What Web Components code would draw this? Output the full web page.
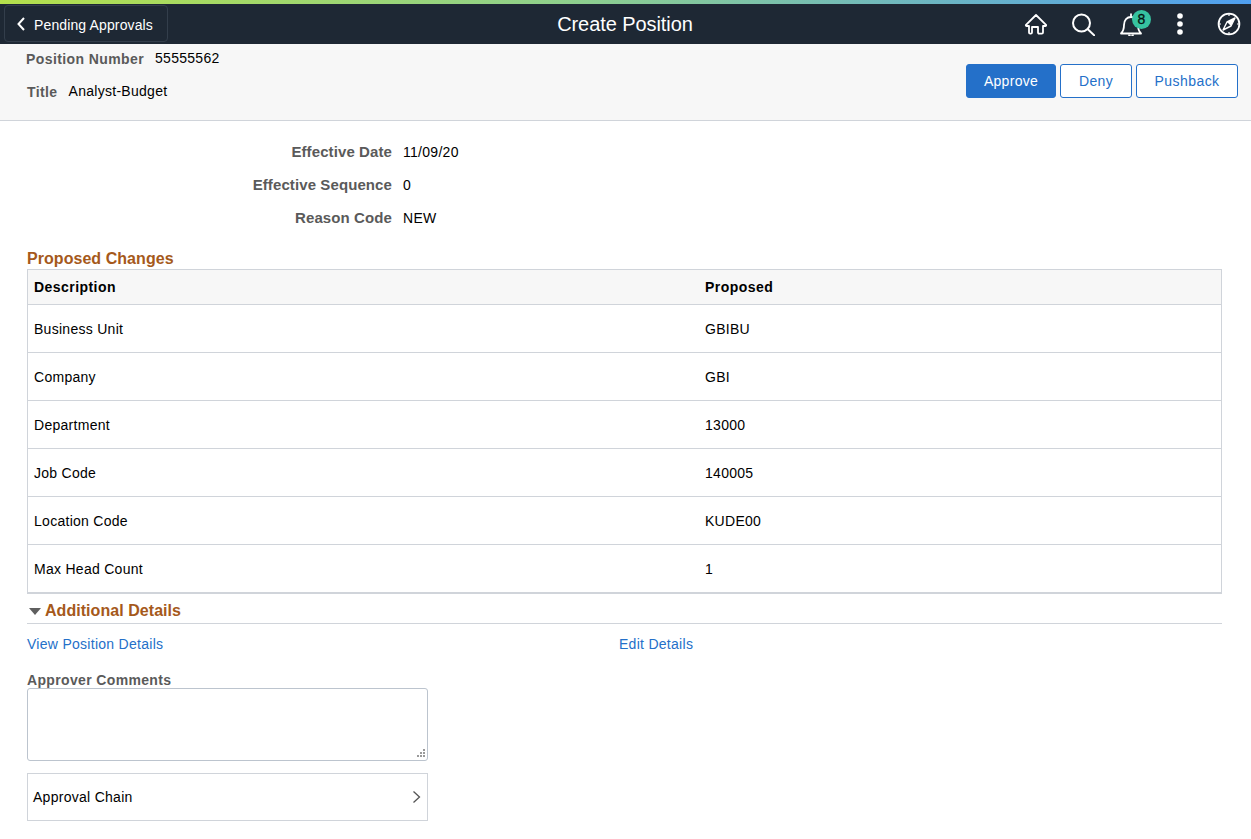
<!DOCTYPE html>
<html lang="en"><head><meta charset="utf-8"><title>Create Position</title>
<style>
html,body{margin:0;padding:0;background:#fff;font:14px "Liberation Sans",Arial,sans-serif;color:#000;letter-spacing:.28px}
body{height:839px;overflow:hidden}
</style></head><body>
<app-topbar heading="Create Position" back="Pending Approvals" count="8"></app-topbar>
<summary-bar number="55555562" title-text="Analyst-Budget"></summary-bar>
<main-content></main-content>
<script>
function shadow(el,html){el.attachShadow({mode:'open'}).innerHTML=html;return el.shadowRoot}
customElements.define('app-topbar',class extends HTMLElement{connectedCallback(){shadow(this,`<style>
:host{display:block;color:#fff}
.strip{height:4px;background:linear-gradient(90deg,#b4e04c 0%,#8fd08c 45%,#4f9ff0 100%)}
.bar{height:40px;background:#1e2834;display:grid;grid-template-columns:1fr auto 1fr;align-items:center}
.back{justify-self:start;display:flex;align-items:center;box-sizing:border-box;width:164px;height:37px;margin:-1px 0 0 4px;padding-left:11px;gap:8px;border:1px solid #333e4b;border-radius:4px;font-size:14px;letter-spacing:.13px}
.back span{padding-top:2px}
h1{margin:0;font-size:20px;font-weight:400;line-height:40px;letter-spacing:-.07px;margin-left:-1px}
.icons{justify-self:end;display:flex;align-items:center;position:relative}
.icons span{display:flex;width:48px;height:40px;align-items:center;justify-content:center;position:relative}
svg{display:block}
.badge{position:absolute;left:25px;top:6px;width:19px;height:19px;border-radius:50%;background:#36c2a0;color:#06120f;font-size:14px;line-height:19px;text-align:center;font-style:normal;letter-spacing:0;-webkit-text-stroke:.3px #06120f}
</style><div class="strip"></div><div class="bar">
<div class="back"><svg width="10" height="16" viewBox="0 0 10 16" fill="none" stroke="#fff" stroke-width="2"><path d="M8 2 2.500 8 8 14"/></svg><span>${this.getAttribute('back')}</span></div>
<h1>${this.getAttribute('heading')}</h1>
<div class="icons">
<span><svg width="24" height="24" viewBox="0 0 24 24" fill="none" stroke="#fff" stroke-width="1.800" stroke-linejoin="round" stroke-linecap="round"><path d="M3 12.800 13 3l10 9.800c.4.600 0 1.200-.6 1.200H20v6.500c0 .8-.5 1.200-1.200 1.200h-2.600c-.7 0-1.200-.4-1.200-1.200V15h-6v5.500c0 .8-.5 1.200-1.200 1.200H7.200c-.7 0-1.200-.4-1.200-1.200V14H3.600c-.6 0-1-.6-.6-1.200z"/></svg></span>
<span><svg width="24" height="24" viewBox="0 0 24 24" fill="none" stroke="#fff" stroke-width="2"><circle cx="10.500" cy="11" r="8.500"/><path d="M16.800 17.300 24 24"/></svg></span>
<span><svg width="24" height="24" viewBox="0 0 24 24" fill="none" stroke="#fff" stroke-width="1.800" stroke-linejoin="round"><path d="M2 21.500c2-2 3-4 3-8.500 0-5 3-8 7-8s7 3 7 8c0 4.500 1 6.500 3 8.500z"/><path d="M10 22.500a2 2 0 0 0 4 0M12 1.500v3"/></svg><i class="badge">${this.getAttribute('count')}</i></span>
<span><svg style="margin-left:2px" width="8" height="24" viewBox="0 0 8 24" fill="#fff"><circle cx="4" cy="4" r="2.800"/><circle cx="4" cy="12" r="2.800"/><circle cx="4" cy="20" r="2.800"/></svg></span>
<span><svg style="margin-left:3px" width="24" height="24" viewBox="0 0 24 24" fill="none" stroke="#fff" stroke-width="1.800"><circle cx="12" cy="12" r="10.400"/><path d="M18 6 14 14 6 18l4-8z" stroke-width="1.400" stroke-linejoin="round"/><path d="M18 6 10 10l4 4z" fill="#fff" stroke="none"/><path d="M12 1.500v2.500M12 20v2.500M1.500 12H4M20 12h2.500" stroke-width="1.200"/></svg></span>
</div></div>`)}});

customElements.define('action-button',class extends HTMLElement{connectedCallback(){shadow(this,`<style>
:host{display:block}
button{display:block;box-sizing:border-box;height:34px;width:var(--w);border:1px solid #2470c9;border-radius:3px;background:#fff;color:#2470c9;font:14px "Liberation Sans",Arial,sans-serif;letter-spacing:var(--ls,.3px);padding:0}
:host([primary]) button{background:#2470c9;color:#fff}
</style><button><slot></slot></button>`)}});

customElements.define('summary-bar',class extends HTMLElement{connectedCallback(){shadow(this,`<style>
:host{display:flex;box-sizing:border-box;height:77px;background:#f7f7f7;border-bottom:1px solid #d0d4da;padding:0 13px 0 26px;justify-content:space-between}
.info{display:flex;flex-direction:column}
.row{display:flex;height:29px;align-items:center}
.row+.row{height:37px}
b{color:#5a5a5a;margin-right:11px;letter-spacing:.4px}
.t{margin-left:1px}
.v{margin-top:-1px}
.acts{display:flex;gap:4px;margin-top:20px}
</style><div class="info">
<div class="row"><b>Position Number</b><span class="v">${this.getAttribute('number')}</span></div>
<div class="row"><b class="t">Title</b><span class="v">${this.getAttribute('title-text')}</span></div>
</div><div class="acts">
<action-button primary style="--w:90px">Approve</action-button>
<action-button style="--w:72px">Deny</action-button>
<action-button style="--w:102px;--ls:.45px">Pushback</action-button>
</div>`)}});

customElements.define('field-row',class extends HTMLElement{connectedCallback(){shadow(this,`<style>
:host{display:grid;grid-template-columns:365px 1fr;column-gap:11px;height:33px;align-items:center}
b{text-align:right;color:#5a5a5a;font-size:15px;letter-spacing:.1px}
</style><b>${this.getAttribute('label')}</b><span><slot></slot></span>`)}});

customElements.define('section-title',class extends HTMLElement{connectedCallback(){shadow(this,`<style>
:host{display:block;font-size:16px;font-weight:700;color:#a5591b;line-height:18px;letter-spacing:.05px}
</style><slot></slot>`)}});

customElements.define('change-table',class extends HTMLElement{connectedCallback(){
const rows=JSON.parse(this.getAttribute('rows'));
shadow(this,`<style>
:host{display:block;border:1px solid #d0d4da;border-bottom-width:2px}
.r{display:grid;grid-template-columns:671px 1fr;padding-left:6px;height:47px;align-items:center;border-top:1px solid #d0d4da}
.h{height:34px;border-top:0;background:#f7f7f7;font-weight:700;letter-spacing:.45px}
</style><div class="r h"><span>Description</span><span>Proposed</span></div>
${rows.map(r=>`<div class="r"><span>${r[0]}</span><span>${r[1]}</span></div>`).join('')}`)}});

customElements.define('main-content',class extends HTMLElement{connectedCallback(){shadow(this,`<style>
:host{display:block;padding:14px 29px 0 27px}
.fields{margin-bottom:16px}
section-title.first{margin-bottom:1px}
.add{display:flex;align-items:center;gap:4px;height:29px;box-sizing:border-box;margin-top:1px;padding:4px 0 0 2px;border-bottom:1px solid #d0d4da}
.add svg{display:block}
.links{display:grid;grid-template-columns:592px 1fr;margin-top:12px;height:16px;line-height:16px;color:#2470c9}
.label{display:block;margin-top:20px;font-weight:700;color:#5a5a5a;line-height:16px;letter-spacing:.35px}
.ta{position:relative;box-sizing:border-box;width:401px;height:73px;border:1px solid #bcc4ce;border-radius:3px}
.ta svg{position:absolute;right:2px;bottom:2px}
.chain{box-sizing:border-box;width:401px;height:48px;margin-top:12px;border:1px solid #d0d4da;display:flex;align-items:center;justify-content:space-between;padding:0 6px 0 5px}
</style>
<div class="fields">
<field-row label="Effective Date">11/09/20</field-row>
<field-row label="Effective Sequence">0</field-row>
<field-row label="Reason Code">NEW</field-row>
</div>
<section-title class="first">Proposed Changes</section-title>
<change-table rows='[["Business Unit","GBIBU"],["Company","GBI"],["Department","13000"],["Job Code","140005"],["Location Code","KUDE00"],["Max Head Count","1"]]'></change-table>
<div class="add"><svg width="12" height="7" viewBox="0 0 12 7" fill="#5f5f5f"><path d="M0 0h12L6 7z"/></svg><section-title>Additional Details</section-title></div>
<div class="links"><span>View Position Details</span><span>Edit Details</span></div>
<span class="label">Approver Comments</span>
<div class="ta"><svg width="9" height="9" viewBox="0 0 9 9" fill="#9a9a9a"><path d="M7 0h2v2H7zM4 3h2v2H4zM7 3h2v2H7zM1 6h2v2H1zM4 6h2v2H4zM7 6h2v2H7z"/></svg></div>
<div class="chain"><span>Approval Chain</span><svg width="9" height="14" viewBox="0 0 9 14" fill="none" stroke="#555" stroke-width="1.300"><path d="M1.500 1.500 7.500 7l-6 5.500"/></svg></div>
`)}});
</script></body></html>
